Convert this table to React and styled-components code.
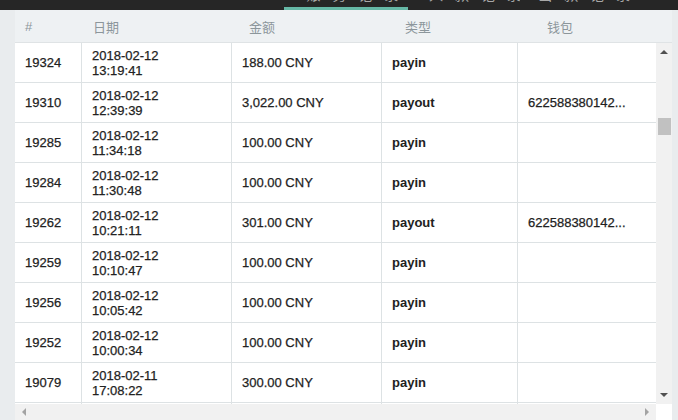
import React from 'react';
import styled, { createGlobalStyle } from 'styled-components';

const GlobalStyle = createGlobalStyle`
    html, body {
        margin: 0;
        padding: 0;
        background: #e9ecee;
        font-family: "Liberation Sans", Arial, "Noto Sans CJK SC", sans-serif;
    }
`;

const Page = styled.div`
    width: 678px;
    height: 420px;
    overflow: hidden;
    display: flex;
    flex-direction: column;
    background: #e9ecee;
`;

const TopNav = styled.div`
    height: 10px;
    flex-shrink: 0;
    background: #262626;
    display: flex;
    padding-left: 284px;
    overflow: hidden;
`;

const Tab = styled.div`
    width: ${p => p.w}px;
    height: 10px;
    display: flex;
    justify-content: center;
    gap: 6px;
    color: #a8a8a8;
    font-size: 14px;
    line-height: 14px;
    box-sizing: border-box;
    overflow: hidden;
    border-bottom: 3px solid ${p => (p.active ? '#66b8a6' : 'transparent')};
`;

const TabText = styled.span`
    margin-top: -12px;
    letter-spacing: 4px;
    white-space: nowrap;
`;

const Body = styled.div`
    flex: 1;
    min-height: 0;
    display: flex;
    padding-left: 15px;
    padding-right: 6px;
`;

const Panel = styled.div`
    flex: 1;
    min-height: 0;
    display: flex;
    flex-direction: column;
    background: #eef1f3;
`;

const HeaderRow = styled.div`
    height: 33px;
    flex-shrink: 0;
    display: grid;
    grid-template-columns: 68px 156px 156px 142px 1fr;
    align-items: center;
    border-bottom: 1px solid #dfe3e5;
    box-sizing: border-box;
    font-size: 13px;
    color: #8c969b;
`;

const HeaderCell = styled.div`
    padding-left: 10px;
`;

const Middle = styled.div`
    flex: 1;
    min-height: 0;
    display: flex;
`;

const Viewport = styled.div`
    width: 641px;
    overflow: hidden;
    background: #fff;
`;

const Row = styled.div`
    height: 40px;
    display: grid;
    grid-template-columns: 67px 150px 150px 136px 138px;
    border-bottom: 1px solid #dde2e4;
    box-sizing: border-box;
`;

const Cell = styled.div`
    display: flex;
    align-items: center;
    padding-left: 10px;
    border-right: 1px solid #dde2e4;
    font-size: 13px;
    line-height: 15px;
    color: #222;
    font-weight: ${p => (p.bold ? 700 : 400)};
    -webkit-text-stroke: ${p => (p.bold ? '0' : '0.25px #222')};
    white-space: nowrap;
    &:last-child {
        border-right: none;
    }
`;

const VScroll = styled.div`
    width: 16px;
    background: #f1f1f1;
    display: flex;
    flex-direction: column;
    align-items: center;
    justify-content: space-between;
    padding: 6px 0;
    box-sizing: border-box;
    position: relative;
`;

const Thumb = styled.div`
    position: absolute;
    left: 2px;
    top: 75px;
    width: 13px;
    height: 17px;
    background: #c1c1c1;
`;

const Bottom = styled.div`
    height: 16px;
    flex-shrink: 0;
    display: flex;
`;

const HScroll = styled.div`
    width: 641px;
    background: #f1f1f1;
    display: flex;
    align-items: center;
    justify-content: space-between;
    padding: 0 6px;
    box-sizing: border-box;
`;

const Corner = styled.div`
    flex: 1;
    background: #fff;
`;

const Arrow = ({ dir, color = '#505050' }) => {
    const pts = {
        up: '0,5 4,1 8,5',
        down: '0,1 4,5 8,1',
        left: '5,0 1,4 5,8',
        right: '1,0 5,4 1,8',
    }[dir];
    const vertical = dir === 'up' || dir === 'down';
    return (
        <svg width={vertical ? 8 : 6} height={vertical ? 6 : 8}>
            <polygon points={pts} fill={color} />
        </svg>
    );
};

const rows = [
    ['19324', '2018-02-12', '13:19:41', '188.00 CNY', 'payin', ''],
    ['19310', '2018-02-12', '12:39:39', '3,022.00 CNY', 'payout', '622588380142...'],
    ['19285', '2018-02-12', '11:34:18', '100.00 CNY', 'payin', ''],
    ['19284', '2018-02-12', '11:30:48', '100.00 CNY', 'payin', ''],
    ['19262', '2018-02-12', '10:21:11', '301.00 CNY', 'payout', '622588380142...'],
    ['19259', '2018-02-12', '10:10:47', '100.00 CNY', 'payin', ''],
    ['19256', '2018-02-12', '10:05:42', '100.00 CNY', 'payin', ''],
    ['19252', '2018-02-12', '10:00:34', '100.00 CNY', 'payin', ''],
    ['19079', '2018-02-11', '17:08:22', '300.00 CNY', 'payin', ''],
    ['19050', '2018-02-11', '16:40:10', '100.00 CNY', 'payin', ''],
];

export default function App() {
    return (
        <Page>
            <GlobalStyle />
            <TopNav>
                <Tab w={124} active>
                    <TabText>▪ 账 务 记 录</TabText>
                </Tab>
                <Tab w={112}>
                    <TabText>▬ 入 款 记 录</TabText>
                </Tab>
                <Tab w={112}>
                    <TabText>● 出 款 记 录</TabText>
                </Tab>
            </TopNav>
            <Body>
                <Panel>
                    <HeaderRow>
                        <HeaderCell>#</HeaderCell>
                        <HeaderCell>日期</HeaderCell>
                        <HeaderCell>金额</HeaderCell>
                        <HeaderCell>类型</HeaderCell>
                        <HeaderCell>钱包</HeaderCell>
                    </HeaderRow>
                    <Middle>
                        <Viewport>
                            {rows.map(r => (
                                <Row key={r[0]}>
                                    <Cell>{r[0]}</Cell>
                                    <Cell>
                                        {r[1]}
                                        <br />
                                        {r[2]}
                                    </Cell>
                                    <Cell>{r[3]}</Cell>
                                    <Cell bold>{r[4]}</Cell>
                                    <Cell>{r[5]}</Cell>
                                </Row>
                            ))}
                        </Viewport>
                        <VScroll>
                            <Arrow dir="up" />
                            <Thumb />
                            <Arrow dir="down" />
                        </VScroll>
                    </Middle>
                    <Bottom>
                        <HScroll>
                            <Arrow dir="left" color="#a3a3a3" />
                            <Arrow dir="right" color="#a3a3a3" />
                        </HScroll>
                        <Corner />
                    </Bottom>
                </Panel>
            </Body>
        </Page>
    );
}
